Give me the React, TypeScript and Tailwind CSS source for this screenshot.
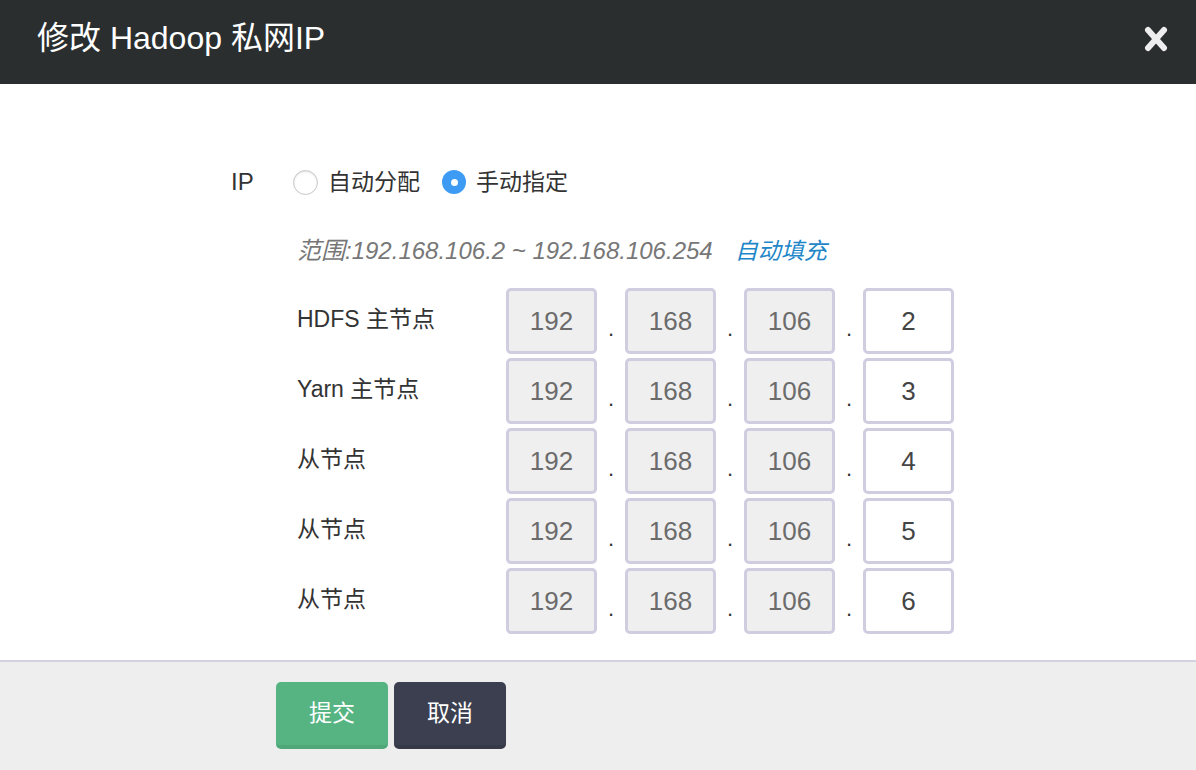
import { useState } from "react";

const FONT = "font-['Liberation_Sans','Noto_Sans_CJK_SC',sans-serif]";

const nodes = [
  { label: "HDFS 主节点", last: "2" },
  { label: "Yarn 主节点", last: "3" },
  { label: "从节点", last: "4" },
  { label: "从节点", last: "5" },
  { label: "从节点", last: "6" },
];

const Radio = ({ checked }: { checked: boolean }) =>
  checked ? (
    <span className="flex h-[24px] w-[24px] items-center justify-center rounded-full bg-[#3d9bf4]">
      <span className="h-[7px] w-[7px] rounded-full bg-white" />
    </span>
  ) : (
    <span className="h-[25px] w-[25px] rounded-full border border-[#c8c8c8] bg-white shadow-[inset_0_1px_2px_rgba(0,0,0,0.12)]" />
  );

const Octet = ({ value, editable }: { value: string; editable?: boolean }) => (
  <div
    className={`flex h-[66px] w-[91px] items-center justify-center rounded-[5px] border-[3px] border-[#cfcddf] text-[26px] ${
      editable ? "bg-white text-[#444]" : "bg-[#efefef] text-[#6b6b6b]"
    }`}
  >
    {value}
  </div>
);

const Dot = () => <span className="w-[28px] pt-[14px] text-center text-[22px] text-[#333]">.</span>;

export default function App() {
  const [mode, setMode] = useState<"auto" | "manual">("manual");

  return (
    <div className={`flex h-[770px] w-[1196px] flex-col bg-white ${FONT}`}>
      <div className="flex h-[84px] shrink-0 items-center justify-between bg-[#2a2e2f] pl-[37px] pr-[28px]">
        <h1 className="pb-[8px] text-[32px] text-white">修改 Hadoop 私网IP</h1>
        <button className="pb-[6px]" aria-label="关闭">
          <svg width="24" height="26" viewBox="0 0 24 26">
            <path d="M4 4 L20 22 M20 4 L4 22" stroke="#eeeeee" strokeWidth="6" strokeLinecap="round" />
          </svg>
        </button>
      </div>

      <div className="flex-1 pl-[231px] pt-[78px]">
        <div className="flex h-[40px] items-center">
          <span className="w-[62px] text-[24px] text-[#333]">IP</span>
          <label className="flex cursor-pointer items-center gap-[10px]" onClick={() => setMode("auto")}>
            <Radio checked={mode === "auto"} />
            <span className="text-[23px] text-[#333]">自动分配</span>
          </label>
          <label className="ml-[22px] flex cursor-pointer items-center gap-[10px]" onClick={() => setMode("manual")}>
            <Radio checked={mode === "manual"} />
            <span className="text-[23px] text-[#333]">手动指定</span>
          </label>
        </div>

        <div className="ml-[66px] mt-[34px] flex h-[30px] items-center italic">
          <span className="text-[24px] text-[#777]">范围:192.168.106.2 ~ 192.168.106.254</span>
          <a className="ml-[22px] text-[23px] text-[#1f87c8]">自动填充</a>
        </div>

        <div className="ml-[66px] mt-[22px] flex flex-col gap-[4px]">
          {nodes.map((n, i) => (
            <div key={i} className="flex items-center">
              <span className="w-[209px] pb-[4px] text-[23px] text-[#333]">{n.label}</span>
              <Octet value="192" />
              <Dot />
              <Octet value="168" />
              <Dot />
              <Octet value="106" />
              <Dot />
              <Octet value={n.last} editable />
            </div>
          ))}
        </div>
      </div>

      <div className="flex h-[110px] shrink-0 gap-[6px] border-t-2 border-[#d3d1e0] bg-[#eeeeee] pl-[276px] pt-[20px]">
        <button className="h-[67px] w-[112px] rounded-[5px] border-b-4 border-[#4ea877] bg-[#56b482] text-[23px] text-white">
          提交
        </button>
        <button className="h-[67px] w-[112px] rounded-[5px] border-b-4 border-[#363947] bg-[#3c3f4f] text-[23px] text-white">
          取消
        </button>
      </div>
    </div>
  );
}
